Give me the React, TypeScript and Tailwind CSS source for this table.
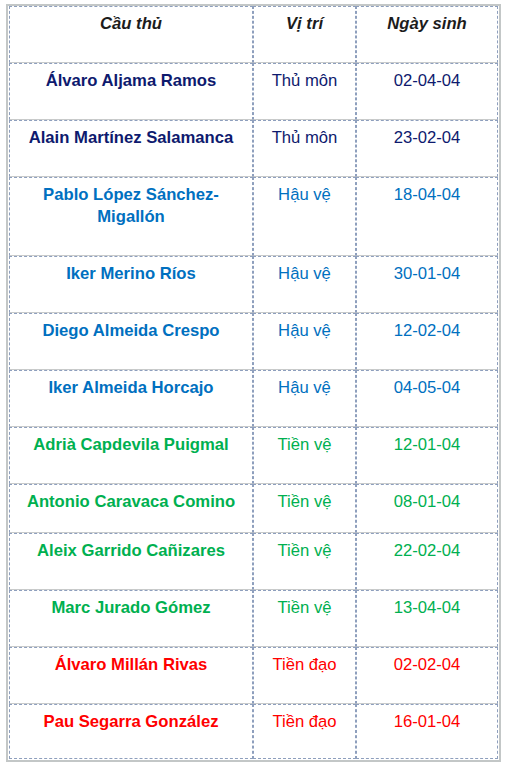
import React from "react";

type Row = { name: string[]; pos: string; date: string; color: string; h: string };

const NAVY = "text-[#0e1a6e]";
const BLUE = "text-[#0070c0]";
const GREEN = "text-[#00b050]";
const RED = "text-[#ff0000]";

const rows: Row[] = [
  { name: ["Álvaro Aljama Ramos"], pos: "Thủ môn", date: "02-04-04", color: NAVY, h: "h-[57px]" },
  { name: ["Alain Martínez Salamanca"], pos: "Thủ môn", date: "23-02-04", color: NAVY, h: "h-[57px]" },
  { name: ["Pablo López Sánchez-", "Migallón"], pos: "Hậu vệ", date: "18-04-04", color: BLUE, h: "h-[79px]" },
  { name: ["Iker Merino Ríos"], pos: "Hậu vệ", date: "30-01-04", color: BLUE, h: "h-[57px]" },
  { name: ["Diego Almeida Crespo"], pos: "Hậu vệ", date: "12-02-04", color: BLUE, h: "h-[57px]" },
  { name: ["Iker Almeida Horcajo"], pos: "Hậu vệ", date: "04-05-04", color: BLUE, h: "h-[57px]" },
  { name: ["Adrià Capdevila Puigmal"], pos: "Tiền vệ", date: "12-01-04", color: GREEN, h: "h-[57px]" },
  { name: ["Antonio Caravaca Comino"], pos: "Tiền vệ", date: "08-01-04", color: GREEN, h: "h-[49px]" },
  { name: ["Aleix Garrido Cañizares"], pos: "Tiền vệ", date: "22-02-04", color: GREEN, h: "h-[57px]" },
  { name: ["Marc Jurado Gómez"], pos: "Tiền vệ", date: "13-04-04", color: GREEN, h: "h-[57px]" },
  { name: ["Álvaro Millán Rivas"], pos: "Tiền đạo", date: "02-02-04", color: RED, h: "h-[57px]" },
  { name: ["Pau Segarra González"], pos: "Tiền đạo", date: "16-01-04", color: RED, h: "h-[55px]" },
];

function Cell({
  children,
  w,
  last,
  extra = "",
}: {
  children: React.ReactNode;
  w: string;
  last: boolean;
  extra?: string;
}) {
  return (
    <div
      className={`${w} shrink-0 border border-dashed border-[#8e9fbd] ${
        last ? "" : "border-b-[#c9cbcb]"
      } pt-[6px] text-center leading-[22px] ${extra}`}
      style={last ? undefined : { borderBottomStyle: "solid" }}
    >
      {children}
    </div>
  );
}

export default function App() {
  return (
    <div className="min-h-[772px] w-[510px] bg-white pt-[4px] pl-[6px] font-['Liberation_Sans',Arial,sans-serif] text-[16.67px]">
      <div className="w-[495px] border-2 border-[#c3c7c7] px-[1px] pb-[1px]">
        <div className="flex h-[57px]">
          <Cell w="w-[244px]" last={false} extra="font-bold italic text-[#1c1c1c]">
            Cầu thủ
          </Cell>
          <Cell w="w-[103px]" last={false} extra="font-bold italic text-[#1c1c1c]">
            Vị trí
          </Cell>
          <Cell w="w-[142px]" last={false} extra="font-bold italic text-[#1c1c1c]">
            Ngày sinh
          </Cell>
        </div>
        {rows.map((r, i) => {
          const last = i === rows.length - 1;
          return (
            <div key={i} className={`flex ${r.h}`}>
              <Cell w="w-[244px]" last={last} extra={`font-bold ${r.color}`}>
                {r.name.map((n, j) => (
                  <div key={j}>{n}</div>
                ))}
              </Cell>
              <Cell w="w-[103px]" last={last} extra={r.color}>
                {r.pos}
              </Cell>
              <Cell w="w-[142px]" last={last} extra={r.color}>
                {r.date}
              </Cell>
            </div>
          );
        })}
      </div>
    </div>
  );
}
